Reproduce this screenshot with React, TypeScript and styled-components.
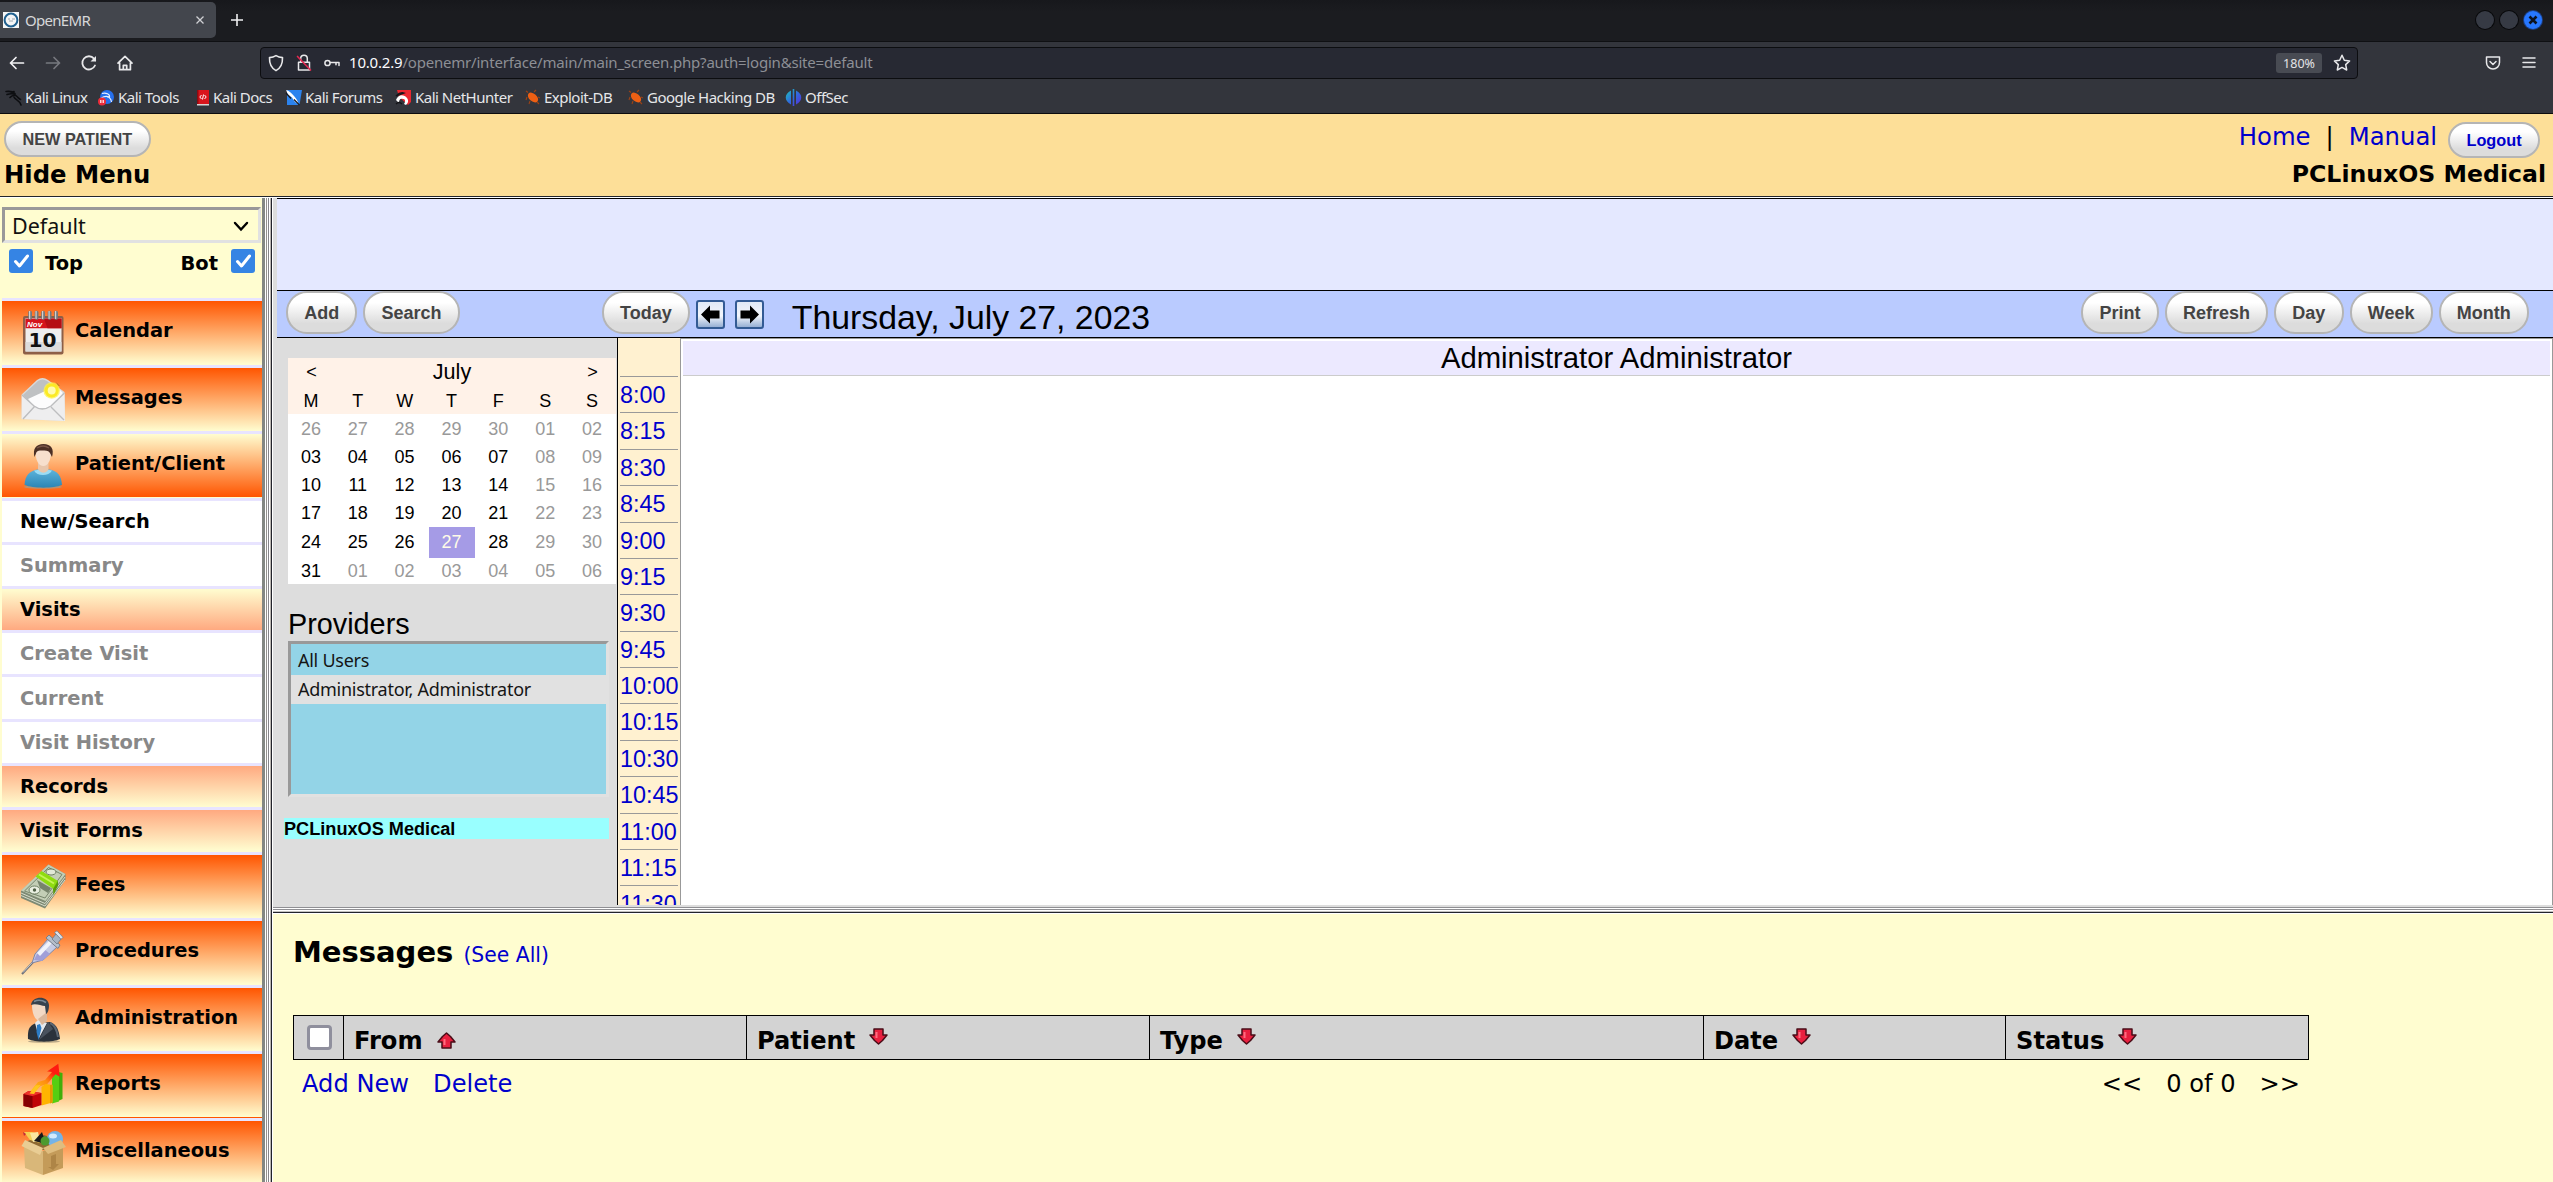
import React from "react";
import styled, { createGlobalStyle, css } from "styled-components";

const sans = `"Liberation Sans", Arial, sans-serif`;
const dejavu = `"DejaVu Sans", Verdana, sans-serif`;
const ui = `"Noto Sans", sans-serif`;

const Global = createGlobalStyle`
  * { box-sizing: border-box; }
  html, body { margin: 0; padding: 0; }
  body { width: 2553px; height: 1182px; overflow: hidden; background: #fffdd0; }
  svg { display: block; flex: none; }
`;

const Page = styled.div`
  width: 2553px;
  height: 1182px;
  display: flex;
  flex-direction: column;
  overflow: hidden;
`;

/* ---------- browser chrome ---------- */

const TabStrip = styled.div`
  height: 42px;
  flex: none;
  display: flex;
  align-items: flex-start;
  justify-content: space-between;
  background: linear-gradient(#17181c, #1b1c20 30%);
  border-bottom: 1px solid #0f1013;
  font-family: ${ui};
`;

const TabGroup = styled.div`
  display: flex;
  align-items: center;
  gap: 14px;
  padding-top: 2px;
`;

const Tab = styled.div`
  width: 216px;
  height: 36px;
  display: flex;
  align-items: center;
  background: #43464d;
  border-radius: 0 5px 5px 0;
  padding: 0 11px 0 3px;
`;

const TabTitle = styled.span`
  flex: 1;
  padding-left: 6px;
  color: #d6d7d9;
  font-size: 15px;
  line-height: 20px;
  letter-spacing: -0.7px;
`;

const WindowControls = styled.div`
  display: flex;
  gap: 6px;
  padding: 11px 11px 0 0;
`;

const WindowDot = styled.span<{ $close?: boolean }>`
  width: 18px;
  height: 18px;
  border-radius: 50%;
  display: flex;
  align-items: center;
  justify-content: center;
  background: ${(p) => (p.$close ? "#2777ff" : "#363a44")};
  box-shadow: 0 0 0 1px ${(p) => (p.$close ? "#1d3f82" : "#08090b")};
`;

const NavBar = styled.div`
  height: 41px;
  flex: none;
  display: flex;
  align-items: center;
  background: #33353c;
  padding: 0 15px 0 7px;
`;

const NavButtons = styled.div`
  display: flex;
  gap: 16px;
  width: 253px;
`;

const UrlBar = styled.div`
  width: 2098px;
  height: 32px;
  display: flex;
  align-items: center;
  background: #272933;
  border: 1px solid #0c0d10;
  border-radius: 4px;
  padding: 0 5px 0 6px;
`;

const UrlIcons = styled.div`
  display: flex;
  gap: 10px;
  width: 82px;
`;

const Url = styled.span`
  flex: 1;
  font: 15px/22px ${ui};
  letter-spacing: -0.2px;
  margin-top: -1px;
  color: #8d8f95;
  white-space: nowrap;
  b {
    font-weight: 400;
    color: #fbfbfe;
  }
`;

const Zoom = styled.span`
  width: 46px;
  height: 20px;
  background: #484b53;
  border-radius: 3px;
  color: #e4e4e6;
  font: 12.5px/21px ${ui};
  text-align: center;
  margin-right: 10px;
`;

const NavRight = styled.div`
  flex: 1;
  display: flex;
  justify-content: flex-end;
  gap: 18px;
`;

const Bookmarks = styled.div`
  height: 31px;
  flex: none;
  display: flex;
  background: #33353c;
  border-bottom: 1px solid #0c0c0d;
  padding: 0 0 2px 5px;
`;

const Bookmark = styled.div<{ $w: number }>`
  width: ${(p) => p.$w}px;
  display: flex;
  align-items: center;
  gap: 3px;
  font: 15px/20px ${ui};
  letter-spacing: -0.5px;
  color: #e6e7e9;
  white-space: nowrap;
  svg {
    margin-top: 1px;
  }
`;

/* ---------- application header ---------- */

const Header = styled.header`
  height: 84px;
  flex: none;
  display: flex;
  justify-content: space-between;
  background: #fddf98;
  border-bottom: 1px solid #fff;
  box-shadow: inset 0 -1px 0 #23262b;
  font-family: ${dejavu};
  font-size: 24.3px;
  padding: 7px 7px 0 4px;
`;

const HeaderRight = styled.div`
  display: flex;
  flex-direction: column;
  align-items: flex-end;
`;

const HeaderLinks = styled.div`
  height: 37px;
  display: flex;
  gap: 15px;
  padding-right: 6px;
  line-height: 30px;
  padding-top: 1px;
`;

const Link = styled.a`
  color: #0000cc;
  white-space: nowrap;
`;

const HeaderTitle = styled.div<{ $gap: number; $size: number }>`
  font-size: ${(p) => p.$size}px;
  font-weight: 700;
  line-height: 25px;
  margin-top: ${(p) => p.$gap}px;
  white-space: nowrap;
`;

const Pill = styled.button<{ $size?: "small"; $blue?: boolean }>`
  font-family: ${sans};
  font-weight: 700;
  color: ${(p) => (p.$blue ? "#0000cc" : "#444")};
  background: linear-gradient(#fff 25%, #dcdcdc 78%);
  border: 2px solid #b5b5b5;
  display: block;
  flex: none;
  margin: 0 0 0 ${(p) => (p.$blue ? "-4px" : "0")};
  ${(p) =>
    p.$size === "small"
      ? css`
          height: 36px;
          font-size: 16.3px;
          line-height: 32px;
          padding: 0 16.4px;
          border-radius: 18px;
        `
      : css`
          height: 43px;
          font-size: 18px;
          line-height: 39px;
          padding: 1px 16.2px 0;
          border-radius: 21px;
        `}
`;

/* ---------- frames ---------- */

const Frames = styled.div`
  flex: 1;
  min-height: 0;
  display: flex;
`;

const Sidebar = styled.nav`
  width: 262px;
  flex: none;
  padding: 9px 0 0 2px;
  overflow: hidden;
  background: #fffdd0;
  font: 700 19.45px/25px ${dejavu};
`;

const VSplit = styled.div`
  width: 11px;
  flex: none;
  background: linear-gradient(
    90deg,
    #838783 3px,
    #fff 3px 4px,
    #93928e 4px 5px,
    #fff 5px 6px,
    #85858a 6px 7px,
    #fff 7px 8px,
    #b9b5b0 8px 9px,
    #22232b 9px 10px,
    #fff 10px
  );
`;

const HSplit = styled.div`
  height: 9px;
  flex: none;
  background: linear-gradient(
    #ddd 2px,
    #8f8f93 2px 3px,
    #fff 3px 4px,
    #8f8f93 4px 5px,
    #fff 5px 6px,
    #c4c2c0 6px 7px,
    #23242c 7px 8px,
    #fff 8px
  );
`;

const FrameSelect = styled.div`
  width: 259px;
  height: 36px;
  border: 3px solid;
  border-color: #999 #e1e1e1 #e1e1e1 #999;
  display: flex;
  align-items: center;
  justify-content: space-between;
  padding: 2px 9px 0 7px;
  font: 400 21.5px/28px ${ui};
  color: #111;
`;

const Toggles = styled.div`
  height: 55px;
  padding: 6px 7px 0 7px;
  display: flex;
  justify-content: space-between;
  align-items: flex-start;
`;

const Toggle = styled.label<{ $gap: number }>`
  display: flex;
  gap: ${(p) => p.$gap}px;
  line-height: 30px;
`;

const CheckedBox = styled.span`
  width: 24px;
  height: 24px;
  border-radius: 3px;
  background: #3584e4;
`;

type Tone = "orange" | "orangeOpen" | "peach" | "peachOpen" | "white";

const tones: Record<Tone, string> = {
  orange: "linear-gradient(#ff5500, #fffdd0)",
  orangeOpen: "linear-gradient(#fffdd0, #ff5500)",
  peach: "linear-gradient(#ffa980, #fffdd0)",
  peachOpen: "linear-gradient(#fffdd0, #ffa980)",
  white: "#fff",
};

/* a row may be followed by a one pixel seam before the next row's rule */
const MenuItem = styled.div<{ $h: number; $tone: Tone; $off?: boolean; $seam?: string }>`
  height: ${(p) => p.$h + 3}px;
  border-top: 3px solid #e8e4ff;
  ${(p) => p.$seam && `box-shadow: 0 1px 0 ${p.$seam}; margin-bottom: 1px;`}
  background: ${(p) => tones[p.$tone]} padding-box;
  color: ${(p) => (p.$off ? "#888" : "#000")};
  display: flex;
  align-items: center;
  gap: 9px;
  padding-left: 18px;
`;

const MenuLabel = styled.span<{ $raised?: boolean }>`
  padding-bottom: ${(p) => (p.$raised ? 4 : 0)}px;
`;

const Main = styled.main`
  flex: 1;
  min-width: 0;
  display: flex;
  flex-direction: column;
`;

/* ---------- calendar frame ---------- */

const CalendarFrame = styled.section`
  height: 707px;
  flex: none;
  background: #ddd;
  padding-left: 4px;
  display: flex;
  flex-direction: column;
  font-family: ${sans};
`;

const TitlePane = styled.div`
  height: 92px;
  flex: none;
  background: #e4e8ff;
  border-top: 1px solid #000;
`;

const Toolbar = styled.div`
  height: 48px;
  flex: none;
  border: solid #000;
  border-width: 1px 0;
  background: #bacbff;
  display: flex;
  gap: 6px;
  padding: 0 24px 0 9px;
`;

const ToolbarSpacer = styled.div<{ $w?: number }>`
  ${(p) => (p.$w ? `width: ${p.$w}px;` : "flex: 1;")}
`;

const StepButtons = styled.div`
  display: flex;
  gap: 10px;
  padding: 9px 0 0 0;
`;

const DateTitle = styled.div`
  font-size: 33.8px;
  line-height: 53px;
  height: 46px;
  padding-left: 22px;
  white-space: nowrap;
`;

const CalendarBody = styled.div`
  flex: 1;
  min-height: 0;
  display: flex;
  overflow: hidden;
`;

const Aside = styled.aside`
  width: 340px;
  flex: none;
  padding: 20px 0 0 7px;
`;

const MiniCalendar = styled.div`
  width: 328px;
  margin-left: 4px;
  background: linear-gradient(#fff2e8 56px, #fff 56px);
  font-size: 18px;
`;

const MonthBar = styled.div`
  height: 28px;
  display: grid;
  grid-template-columns: 1fr 5fr 1fr;
  text-align: center;
  line-height: 29px;
`;

const Month = styled.span`
  font-size: 21.6px;
  line-height: 28px;
`;

const Week = styled.div<{ $h: number }>`
  display: grid;
  grid-template-columns: repeat(7, 1fr);
  height: ${(p) => p.$h}px;
  line-height: ${(p) => p.$h + 2}px;
  text-align: center;
`;

const Day = styled.span<{ $dim?: boolean; $today?: boolean }>`
  height: 100%;
  overflow: visible;
  padding-right: 1px;
  color: ${(p) => (p.$today ? "#fffbe8" : p.$dim ? "#999" : "#000")};
  background: ${(p) => (p.$today ? "#a59be6" : "none")};
`;

const ProvidersTitle = styled.div`
  font-size: 28.8px;
  line-height: 36px;
  height: 35px;
  margin: 22px 0 0 4px;
`;

const ProviderList = styled.div`
  width: 321px;
  height: 156px;
  margin-left: 4px;
  border: 3px solid;
  border-color: #999 #e1e1e1 #e1e1e1 #999;
  background: #93d4e7;
  font: 18px/29px ${ui};
  letter-spacing: -0.27px;
  color: #151515;
  padding-top: 2px;
`;

const Provider = styled.div<{ $selected?: boolean }>`
  height: 29px;
  padding-left: 7px;
  background: ${(p) => (p.$selected ? "#e1e1e1" : "none")};
`;

const Facility = styled.div`
  width: 325px;
  height: 21px;
  margin-top: 21px;
  background: #9ff;
  font-size: 18.15px;
  font-weight: 700;
  line-height: 22px;
`;

const Times = styled.div`
  width: 63px;
  flex: none;
  border-left: 1px solid #000;
  background: #fff1d0;
  padding: 38px 2px 0 2px;
`;

const Time = styled.div`
  height: 36.38px;
  border-top: 1px solid #999;
  font-size: 23.4px;
  line-height: 36px;
  color: #0000cc;
`;

const DayColumn = styled.div`
  flex: 1;
  border: solid #999;
  border-width: 1px 1px 0 1px;
  padding: 2px;
  background: #fff;
`;

const DayHeading = styled.div`
  height: 35px;
  background: #ece9ff;
  border-bottom: 1px solid #ccc;
  font-size: 29.25px;
  line-height: 34px;
  text-align: center;
`;

/* ---------- messages frame ---------- */

const MessagesFrame = styled.section`
  flex: 1;
  background: #fffdd0;
  padding: 21px 0 0 20px;
  font: 24.15px/32px ${dejavu};
`;

const MessagesTitle = styled.h1`
  margin: 0;
  font-size: 29px;
  line-height: 34px;
  height: 34px;
`;

const SeeAll = styled.a`
  color: #0000cc;
  font-size: 20.35px;
  font-weight: 400;
`;

const Table = styled.div`
  width: 2016px;
  height: 45px;
  margin-top: 46px;
  border: 1px solid #000;
  background: #d3d3d3;
  display: flex;
  font-weight: 700;
`;

const HeadCell = styled.div<{ $w?: number }>`
  ${(p) => (p.$w ? `width: ${p.$w}px; border-right: 1px solid #000;` : "flex: 1;")}
  display: flex;
  gap: 14px;
  padding: 9px 0 0 10px;
`;

const SortIcon = styled.span<{ $up?: boolean }>`
  padding-top: ${(p) => (p.$up ? 7 : 3)}px;
`;

const EmptyBox = styled.span`
  width: 25px;
  height: 25px;
  margin-left: 3px;
  border: 3px solid #8f8f9d;
  border-radius: 4px;
  background: #fff;
`;

const TableFoot = styled.div`
  width: 2016px;
  display: flex;
  justify-content: space-between;
  padding: 8px 9px 0 9px;
`;

const FootGroup = styled.div`
  display: flex;
  gap: 24px;
`;

/* ---------- drawings ---------- */

const line = { fill: "none", stroke: "#e8e8ea", strokeWidth: 1.7, strokeLinecap: "round", strokeLinejoin: "round" } as const;

const BackIcon = ({ dim }: { dim?: boolean }) => (
  <svg width="20" height="20" viewBox="0 0 20 20" {...line} stroke={dim ? "#77797f" : "#f3f3f5"}>
    <path d={dim ? "M3.5 10h13M11 4.5l5.500 5.500L11 15.500" : "M16.500 10H3.500M9 4.500L3.500 10 9 15.500"} />
  </svg>
);

const ReloadIcon = () => (
  <svg width="20" height="20" viewBox="0 0 20 20" {...line} strokeWidth="1.8">
    <path d="M16 12.5A6.6 6.6 0 1 1 15 5.600l1.200 1.600" />
    <path d="M17 3v5.500h-5.500z" fill="#e8e8ea" stroke="none" />
  </svg>
);

const HomeIcon = () => (
  <svg width="20" height="20" viewBox="0 0 20 20" {...line}>
    <path d="M3 10.200L10 3.300l7 6.900M4.600 9.500v7.200h10.800V9.500M8.300 16.500v-4.200h3.400v4.200" />
  </svg>
);

const ShieldIcon = () => (
  <svg width="18" height="18" viewBox="0 0 18 18" {...line} strokeWidth="1.6">
    <path d="M9 1.600c2 1.300 4.200 1.900 6.500 2 .2 5.800-1.600 10.400-6.500 13-4.900-2.600-6.700-7.200-6.500-13C4.800 3.500 7 2.900 9 1.600z" />
  </svg>
);

const LockIcon = () => (
  <svg width="18" height="18" viewBox="0 0 18 18" {...line} strokeWidth="1.500">
    <path d="M5.700 8V4.500a3.300 3.300 0 0 1 6.600 0V8M3.500 8.200h11v7.800h-11z" />
    <path d="M2.500 2.500L15.500 16" stroke="#e22850" strokeWidth="1.700" />
  </svg>
);

const KeyIcon = () => (
  <svg width="18" height="18" viewBox="0 0 18 18" {...line} strokeWidth="1.500">
    <circle cx="4.500" cy="9" r="2.600" />
    <path d="M7.500 8.500h8.500v3M13 8.500v2.200" />
  </svg>
);

const StarIcon = () => (
  <svg width="20" height="20" viewBox="0 0 20 20" {...line} strokeWidth="1.500">
    <path d="M10 2.300l2.300 5 5.300.6-3.900 3.700 1 5.400L10 14.400 5.300 17l1-5.400L2.400 7.900l5.300-.6z" />
  </svg>
);

const PocketIcon = () => (
  <svg width="18" height="18" viewBox="0 0 18 18" {...line} strokeWidth="1.500">
    <path d="M2.500 3h13v5.500a6.500 6.500 0 0 1-13 0zM6 7.500l3 3 3-3" />
  </svg>
);

const BurgerIcon = () => (
  <svg width="18" height="18" viewBox="0 0 18 18" {...line} strokeWidth="1.500">
    <path d="M3 4h12M3 8.500h12M3 13h12" />
  </svg>
);

const Favicon = () => (
  <svg width="16" height="16" viewBox="0 0 16 16">
    <rect width="16" height="16" fill="#f5f6f7" />
    <circle cx="8" cy="8" r="6.400" fill="none" stroke="#20608f" strokeWidth="2" />
    <path d="M5 7h2M9 7h3M6 9h4" stroke="#a0a8b0" />
  </svg>
);

const DragonIcon = () => (
  <svg width="17" height="17" viewBox="0 0 17 17" fill="none" stroke="#0d0e11" strokeWidth="1.600" strokeLinecap="round">
    <path d="M1 2.500c4-.5 7 0 9 2M2 5.500c3-1 6-1 8 0M5 8.500c2-2 5-3 7-1 1.500 1.500 2 2.500 3.500 3M9 8c1 3 5 2.500 7 8M6 4.500l3-2" />
  </svg>
);

const ToolsIcon = () => (
  <svg width="17" height="17" viewBox="0 0 17 17">
    <circle cx="9" cy="8" r="7" fill="#2670ee" />
    <path d="M4 4.500c4-1 8 .5 7.500 3.500-3-1-6-.5-8 1M9 8c3 0 4 2 4.500 5" fill="none" stroke="#e8efff" strokeWidth="1.200" />
    <circle cx="4" cy="12.500" r="4" fill="#ee2c3a" />
    <path d="M2.500 11v3M4 11v3M5.500 11v3" stroke="#fff" strokeWidth=".8" />
  </svg>
);

const DocsIcon = () => (
  <svg width="14" height="17" viewBox="0 0 14 17">
    <path d="M1 1h12v14H1z" fill="#d9151c" />
    <path d="M1 1h1.500v14H1z" fill="#8f0a10" />
    <path d="M1 15h12v1.500H1z" fill="#d8d4d4" />
    <path d="M5.500 6L3.800 8l1.700 2M8.500 6l1.700 2-1.700 2M7.500 5.500l-1 5" fill="none" stroke="#fff" strokeWidth="1" />
  </svg>
);

const ForumsIcon = () => (
  <svg width="17" height="17" viewBox="0 0 17 17">
    <path d="M2 1h15l-2.500 15H2z" fill="#2b83ee" />
    <path d="M1 1c3 1 5 2.500 8 6 2 2.500 3.500 4 5 8.500l-4-2.500-3-4.500-4-3z" fill="#fff" />
    <path d="M1 4l5 5.500M9 10.500l5.500 5.500" stroke="#15161a" strokeWidth="1.200" />
  </svg>
);

const HunterIcon = () => (
  <svg width="17" height="17" viewBox="0 0 17 17">
    <path d="M2 1h14v12L13 16 4 8z" fill="#ea2730" />
    <path d="M1 11c2-6 8-6 11-2 2 3 1 5-1 7l-2-1c2-3 1-5-1-5-3-1-4 1-4 4z" fill="#fff" />
    <path d="M1 7c2-2 5-4 8-3l-5 2zM1 15c2-2 4-2 6 0" stroke="#141418" fill="none" strokeWidth="1.300" />
  </svg>
);

const BugIcon = () => (
  <svg width="16" height="17" viewBox="0 0 16 17">
    <ellipse cx="8" cy="8.500" rx="6" ry="3.800" transform="rotate(42 8 8.500)" fill="#ee5f13" />
    <path d="M2 8l-1 3M5 12l-1 3M9 3l2-2M3 3.500L1 2M13 8l2 1M12 13l2 2" stroke="#9a4216" strokeWidth="1.100" fill="none" />
  </svg>
);

const OffsecIcon = () => (
  <svg width="17" height="17" viewBox="0 0 17 17">
    <defs>
      <linearGradient id="offsec" x1="0" y1="0" x2="1" y2="1">
        <stop offset="0" stopColor="#1cc7b4" />
        <stop offset=".5" stopColor="#2f6be0" />
        <stop offset="1" stopColor="#5a2ad6" />
      </linearGradient>
    </defs>
    <path d="M6 1.500v14C-1 12-1 5 6 1.500zM7.700 0h1.600v17H7.700zM11 1.500c7 3.500 7 10.500 0 14z" fill="url(#offsec)" />
  </svg>
);

const Check = () => (
  <svg width="24" height="24" viewBox="0 0 24 24" fill="none" stroke="#fff" strokeWidth="3" strokeLinejoin="round" strokeLinecap="round">
    <path d="M6.500 12.500l4 4.500L18.500 7" />
  </svg>
);

const StepIcon = ({ next }: { next?: boolean }) => (
  <svg width="29" height="29" viewBox="0 0 29 29">
    <defs>
      <linearGradient id="step" x1="0" y1="0" x2="0" y2="1">
        <stop offset="0" stopColor="#dfe8f6" />
        <stop offset=".55" stopColor="#f3f6fb" />
        <stop offset="1" stopColor="#8ea9d0" />
      </linearGradient>
    </defs>
    <rect x="1" y="1" width="27" height="27" rx="2" fill="url(#step)" stroke="#335b94" strokeWidth="2" />
    <path d="M5 14.500L14 5.500v5h9.500v8H14v5z" fill="#000" transform={next ? "translate(29 0) scale(-1 1)" : undefined} />
  </svg>
);

const SortArrow = ({ up }: { up?: boolean }) => (
  <svg width="19" height="17" viewBox="0 0 19 17">
    <path
      d="M5 1h9v6h4l-4.500 5.500L9.500 16 5.500 12.500 1 7h4z"
      fill="#e8203f"
      stroke="#4a0d18"
      strokeWidth="1.500"
      strokeLinejoin="round"
      transform={up ? "translate(0 17) scale(1 -1)" : undefined}
    />
    <path d="M7.500 4v6" stroke="#ff6c80" strokeWidth="2" transform={up ? "translate(0 3)" : undefined} />
  </svg>
);

const Art = ({ children }: { children: React.ReactNode }) => (
  <svg width="46" height="46" viewBox="0 0 46 46">
    {children}
  </svg>
);

const NovText = styled.text`
  font: italic 700 8px ${sans};
  fill: #fff;
`;

const TenText = styled.text`
  font: 700 19px ${dejavu};
  fill: #111;
`;

const CalendarArt = () => (
  <Art>
    <rect x="3" y="6" width="40.500" height="38.500" rx="2" fill="#8d5f47" />
    <path d="M5.500 8h36v33.500h-36z" fill="#eeeeee" />
    <path d="M5.500 32h36v9.500h-36z" fill="#dcdcdc" />
    <path d="M5.500 8.500h36v9.700h-36z" fill="#d5141b" />
    <path d="M24 8.500h17.500v9.700h-14z" fill="#b50e14" />
    <NovText x="7" y="16.500">Nov</NovText>
    {[9.5, 16, 22.5, 29, 35.5].map((x) => (
      <g key={x}>
        <rect x={x - 1.3} y=".8" width="3.800" height="9" rx="1.700" fill="#77787a" />
        <rect x={x - 0.5} y="1" width="1.200" height="8" fill="#d0d0d0" />
      </g>
    ))}
    <TenText x="8.500" y="37" textLength="28" lengthAdjust="spacingAndGlyphs">10</TenText>
  </Art>
);

const MailArt = () => (
  <Art>
    <path d="M1.700 17.500L17 3q5.500-4 11 0l16.500 12L45 44 1.700 42z" fill="#d9dadb" />
    <path d="M3 18L18 4q4.500-3 9 0l16 12-12 14H15z" fill="#bfc1c3" />
    <path d="M8 22L36 9l7 7-11 15H15z" fill="#fcfcfd" />
    <path d="M1.700 18L14 29q8 6 17 0l13.500-13L45 44 1.700 42z" fill="#eeeeef" />
    <path d="M2 18l12 11q8 6 17 0l13.500-13M3 42l12-13M44 43L31 30" fill="none" stroke="#bdbec0" strokeWidth="1.400" />
    <circle cx="31.700" cy="13.500" r="8.300" fill="#fff34a" opacity=".75" />
    <circle cx="31.700" cy="13.500" r="7" fill="#fbea25" />
    <circle cx="31.700" cy="13.500" r="4" fill="#fffbb0" />
    <path d="M36 5l4 4-2-.5z" fill="#a98715" />
  </Art>
);

const PatientArt = () => (
  <Art>
    <defs>
      <linearGradient id="shirt" x1="0" y1="0" x2="0" y2="1">
        <stop offset="0" stopColor="#5db4dc" />
        <stop offset="1" stopColor="#2c85b4" />
      </linearGradient>
    </defs>
    <ellipse cx="23" cy="44" rx="19" ry="1.700" fill="#93a6a0" opacity=".6" />
    <path d="M4.500 42C5 32 10 28 17 26.500h13c7 1.500 11.500 6 12 15.500-8 3.500-29 3.500-37.500 0z" fill="url(#shirt)" />
    <path d="M14 27.500c5-1.500 14-1.500 18 0-3 6-15 6-18 0z" fill="#9bdcf4" />
    <path d="M18 20h10.500v6c-2 5-8 5-10.500 0z" fill="#e8c6ac" />
    <path d="M15.500 9c0-8 15.500-8 15.500 0 0 8-3 14-7.700 14S15.500 17 15.500 9z" fill="#f7dfcd" />
    <path d="M14.500 14C12.500 6 16 1 23.500 1s11 5 8.500 13l-1.500-3c-1-3-4-4-8-3.500-4 0-6 .5-6.500 3z" fill="#4c2f24" />
    <path d="M17 5q6-4 12 0" fill="none" stroke="#7a5546" strokeWidth="1.500" />
  </Art>
);

const MoneyArt = () => (
  <Art>
    <path d="M1 27L28.500.5 45.500 10v6L25 44.500 1 34z" fill="#7e8a74" />
    <path d="M1 26.500L28.500.5 45.500 10 25.500 37z" fill="#c3ceb6" />
    <path d="M1 29l24 10.500 20-26.500M1 31.500L25 42l20-26" fill="none" stroke="#d6dccb" strokeWidth="1" />
    <path d="M4.500 27L28.500 3.500 42 10.500 25 34z" fill="none" stroke="#78866d" />
    <ellipse cx="14.500" cy="26" rx="5.500" ry="4" fill="#e9efe1" stroke="#6f8064" />
    <circle cx="14.500" cy="26" r="1.700" fill="#4e5e45" />
    <ellipse cx="31" cy="8" rx="5" ry="3" fill="#e2e9d8" stroke="#6f8064" />
    <path d="M15.500 12.500l6-5.500L38 17l-4.500 8z" fill="#8fdc10" />
    <path d="M33 25l5-8.500v5L33.500 31z" fill="#5a9c08" />
    <path d="M19 10.500l15 9" stroke="#c4f457" strokeWidth="2" />
    <path d="M17 16l14 8-3 5-8-5z" fill="#43513b" opacity=".6" />
  </Art>
);

const SyringeArt = () => (
  <Art>
    <path d="M2 44l13-14" stroke="#6d7078" strokeWidth="2" />
    <path d="M3 42.500l12-13" stroke="#d7dae0" strokeWidth=".8" />
    <path d="M12 33l3-9L28 9l9 8-14 13z" fill="#c6cbe4" stroke="#8287a5" />
    <path d="M14 30l3-6 6-6 7 6-8 7z" fill="#a09fd8" />
    <path d="M17 23L29 11l3 2-12 13z" fill="#f1f3fb" />
    <path d="M26 8l3-3 11 10-2 3.500z" fill="#b6bfcb" stroke="#78818e" />
    <path d="M32 9l4-5 5 5-4 5z" fill="#a8b4c4" stroke="#6e7886" strokeWidth=".8" />
    <path d="M34.500 2.500L37 .8l6 6.500-2 2z" fill="#d9e0ea" stroke="#747e8d" strokeWidth=".8" />
  </Art>
);

const AdminArt = () => (
  <Art>
    <ellipse cx="24" cy="44.500" rx="16" ry="1.300" fill="#77705f" opacity=".5" />
    <path d="M8 42c-.5-9 1-13 7-15.500l15-1.500c7 2 9 9 10 17-7 3.500-25 3.500-32 0z" fill="#2b323b" />
    <path d="M30 26c5 2 7 7 8 14" fill="none" stroke="#5b6672" strokeWidth="2" />
    <path d="M15 26l3-3 9 3-8 15z" fill="#e4e9ef" />
    <path d="M17 28l3-1 1.500 4-3 12-2-8z" fill="#2b7bc5" />
    <path d="M28 25l-9 18 14-11z" fill="#49525e" />
    <path d="M12 9c0-6 14-7 15 0 .5 7-2 15-7 15S12 16 12 9z" fill="#f3d9c4" />
    <path d="M18 22l9-7v9l-5 4z" fill="#dbb79b" />
    <path d="M11 8c1-9 17-10 18 0 0 4-1 8-3 9l-1-8c-4 0-9-3-14-1z" fill="#37424d" />
    <path d="M14 4.500q6-3 12 1" fill="none" stroke="#778795" strokeWidth="1.600" />
  </Art>
);

const ReportsArt = () => (
  <Art>
    <defs>
      <linearGradient id="trend" x1="0" y1="1" x2="1" y2="0">
        <stop offset="0" stopColor="#ffd21a" />
        <stop offset=".5" stopColor="#ff8a10" />
        <stop offset=".75" stopColor="#ff1a10" />
      </linearGradient>
    </defs>
    <path d="M32 12l4-3.500 6.500 1.500v26L37 38.500l-5 .5z" fill="#41ae09" />
    <path d="M32 11l7-1v28.500l-7 2z" fill="#55ce12" />
    <path d="M9 30l9-11 7-2 7-8-5-.5L38.300.8l1.500 13-4.300-2.500-8.500 10-7 2-7 8z" fill="url(#trend)" />
    <path d="M21.500 24l4-3 7 1v17.500l-11 3z" fill="#ffb400" />
    <path d="M30 22l2.500-.5v18l-2.500 1z" fill="#e39a00" />
    <path d="M3.500 31l5-3 13 2v12l-9 3-9-2z" fill="#c00508" />
    <path d="M3.500 31l9 2v12l-9-2z" fill="#870003" />
    <path d="M3.500 31l5-3 13 2-9 3z" fill="#ef322a" />
    <path d="M9.500 30.500l6-8 5-.5-6.500 9z" fill="#ffc51c" />
  </Art>
);

const BoxArt = () => (
  <Art>
    <path d="M5 12L24 5l17 6v9H5z" fill="#8e6a33" />
    <circle cx="35" cy="9" r="8" fill="#74b3e8" />
    <ellipse cx="33" cy="6" rx="4" ry="2.500" fill="#d3eafc" />
    <path d="M4 2l6 8 10 3-2-9-6-2z" fill="#f5cf51" />
    <path d="M10 3l8-1 2 9-7 1z" fill="#fbe6a0" />
    <path d="M3 2l3 2-2 2z" fill="#c3283a" />
    <path d="M14 11l8-9 4 12z" fill="#17191c" />
    <circle cx="25" cy="11" r="4.500" fill="#4c9a2f" />
    <path d="M4 16l19 5v24L5 38z" fill="#d9b779" />
    <path d="M23 21l20-6v23L23 45z" fill="#c49b59" />
    <path d="M1.500 16l3.500-6 18 8-3 7z" fill="#e9cd94" />
    <path d="M23 18l18-8 5 7-18 7z" fill="#dfbd7f" />
    <path d="M31 26l5-2v10h3l-6 6-5-3h3z" fill="#ae8546" />
  </Art>
);

/* ---------- data ---------- */

const bookmarks: { label: string; icon: React.ReactNode; w: number }[] = [
  { label: "Kali Linux", icon: <DragonIcon />, w: 93 },
  { label: "Kali Tools", icon: <ToolsIcon />, w: 98 },
  { label: "Kali Docs", icon: <DocsIcon />, w: 89 },
  { label: "Kali Forums", icon: <ForumsIcon />, w: 110 },
  { label: "Kali NetHunter", icon: <HunterIcon />, w: 130 },
  { label: "Exploit-DB", icon: <BugIcon />, w: 103 },
  { label: "Google Hacking DB", icon: <BugIcon />, w: 157 },
  { label: "OffSec", icon: <OffsecIcon />, w: 90 },
];

const cream = "#fffdd0";

const menu: { label: string; h: number; tone: Tone; icon?: React.ReactNode; off?: boolean; seam?: string }[] = [
  { label: "Calendar", h: 63, tone: "orange", icon: <CalendarArt />, seam: cream },
  { label: "Messages", h: 63, tone: "orange", icon: <MailArt /> },
  { label: "Patient/Client", h: 63, tone: "orangeOpen", icon: <PatientArt />, seam: cream },
  { label: "New/Search", h: 41, tone: "white" },
  { label: "Summary", h: 41, tone: "white", off: true },
  { label: "Visits", h: 41, tone: "peachOpen" },
  { label: "Create Visit", h: 41, tone: "white", off: true },
  { label: "Current", h: 42, tone: "white", off: true },
  { label: "Visit History", h: 41, tone: "white", off: true },
  { label: "Records", h: 41, tone: "peach" },
  { label: "Visit Forms", h: 41, tone: "peach", seam: cream },
  { label: "Fees", h: 63, tone: "orange", icon: <MoneyArt /> },
  { label: "Procedures", h: 63, tone: "orange", icon: <SyringeArt />, seam: cream },
  { label: "Administration", h: 63, tone: "orange", icon: <AdminArt /> },
  { label: "Reports", h: 63, tone: "orange", icon: <ReportsArt />, seam: "#ff5500" },
  { label: "Miscellaneous", h: 63, tone: "orange", icon: <BoxArt /> },
];

const weeks = [
  ["26", "27", "28", "29", "30", "01", "02"],
  ["03", "04", "05", "06", "07", "08", "09"],
  ["10", "11", "12", "13", "14", "15", "16"],
  ["17", "18", "19", "20", "21", "22", "23"],
  ["24", "25", "26", "27", "28", "29", "30"],
  ["31", "01", "02", "03", "04", "05", "06"],
];
const weekHeights = [28, 28, 28, 29, 29, 28];

const isDim = (week: number, day: number) => week === 0 || day > 4 || (week === 5 && day > 0);

const times = ["8", "9", "10", "11"].flatMap((h) => ["00", "15", "30", "45"].map((m) => `${h}:${m}`)).slice(0, 15);

const columns: { label: string; w?: number; up?: boolean }[] = [
  { label: "From", w: 403, up: true },
  { label: "Patient", w: 403 },
  { label: "Type", w: 554 },
  { label: "Date", w: 302 },
  { label: "Status" },
];

export default function App() {
  return (
    <Page>
      <Global />
      <TabStrip>
        <TabGroup>
          <Tab>
            <Favicon />
            <TabTitle>OpenEMR</TabTitle>
            <svg width="10" height="10" viewBox="0 0 10 10" stroke="#d0d1d4" strokeWidth="1.300">
              <path d="M1.500 1.500l7 7M8.500 1.500l-7 7" />
            </svg>
          </Tab>
          <svg width="14" height="14" viewBox="0 0 14 14" stroke="#f0f0f2" strokeWidth="1.600">
            <path d="M7 1v12M1 7h12" />
          </svg>
        </TabGroup>
        <WindowControls>
          <WindowDot />
          <WindowDot />
          <WindowDot $close>
            <svg width="10" height="10" viewBox="0 0 10 10" stroke="#0c1220" strokeWidth="2.600">
              <path d="M1.500 1.500l7 7M8.500 1.500l-7 7" />
            </svg>
          </WindowDot>
        </WindowControls>
      </TabStrip>
      <NavBar>
        <NavButtons>
          <BackIcon />
          <BackIcon dim />
          <ReloadIcon />
          <HomeIcon />
        </NavButtons>
        <UrlBar>
          <UrlIcons>
            <ShieldIcon />
            <LockIcon />
            <KeyIcon />
          </UrlIcons>
          <Url>
            <b>10.0.2.9</b>/openemr/interface/main/main_screen.php?auth=login&amp;site=default
          </Url>
          <Zoom>180%</Zoom>
          <StarIcon />
        </UrlBar>
        <NavRight>
          <PocketIcon />
          <BurgerIcon />
        </NavRight>
      </NavBar>
      <Bookmarks>
        {bookmarks.map((b) => (
          <Bookmark key={b.label} $w={b.w}>
            {b.icon}
            {b.label}
          </Bookmark>
        ))}
      </Bookmarks>

      <Header>
        <div>
          <Pill $size="small">NEW PATIENT</Pill>
          <HeaderTitle $gap={5} $size={24.3}>Hide Menu</HeaderTitle>
        </div>
        <HeaderRight>
          <HeaderLinks>
            <Link>Home</Link>
            <span>|</span>
            <Link>Manual</Link>
            <Pill $size="small" $blue>
              Logout
            </Pill>
          </HeaderLinks>
          <HeaderTitle $gap={4} $size={23.6}>PCLinuxOS Medical</HeaderTitle>
        </HeaderRight>
      </Header>

      <Frames>
        <Sidebar>
          <FrameSelect>
            Default
            <svg width="16" height="11" viewBox="0 0 16 11" fill="none" stroke="#000" strokeWidth="2.400" strokeLinecap="round">
              <path d="M2 2l6 6.500L14 2" />
            </svg>
          </FrameSelect>
          <Toggles>
            <Toggle $gap={12}>
              <CheckedBox>
                <Check />
              </CheckedBox>
              Top
            </Toggle>
            <Toggle $gap={13}>
              Bot
              <CheckedBox>
                <Check />
              </CheckedBox>
            </Toggle>
          </Toggles>
          {menu.map((m) => (
            <MenuItem key={m.label} $h={m.h} $tone={m.tone} $off={m.off} $seam={m.seam}>
              {m.icon}
              <MenuLabel $raised={!!m.icon}>{m.label}</MenuLabel>
            </MenuItem>
          ))}
        </Sidebar>
        <VSplit />
        <Main>
          <CalendarFrame>
            <TitlePane />
            <Toolbar>
              <Pill>Add</Pill>
              <Pill>Search</Pill>
              <ToolbarSpacer $w={130} />
              <Pill>Today</Pill>
              <StepButtons>
                <StepIcon />
                <StepIcon next />
              </StepButtons>
              <DateTitle>Thursday, July 27, 2023</DateTitle>
              <ToolbarSpacer />
              {["Print", "Refresh", "Day", "Week", "Month"].map((t) => (
                <Pill key={t}>{t}</Pill>
              ))}
            </Toolbar>
            <CalendarBody>
              <Aside>
                <MiniCalendar>
                  <MonthBar>
                    <span>&lt;</span>
                    <Month>July</Month>
                    <span>&gt;</span>
                  </MonthBar>
                  <Week $h={28}>
                    {["M", "T", "W", "T", "F", "S", "S"].map((d, i) => (
                      <Day key={i}>{d}</Day>
                    ))}
                  </Week>
                  {weeks.map((w, wi) => (
                    <Week key={wi} $h={weekHeights[wi]}>
                      {w.map((d, di) => (
                        <Day key={di} $dim={isDim(wi, di)} $today={wi === 4 && di === 3}>
                          {d}
                        </Day>
                      ))}
                    </Week>
                  ))}
                </MiniCalendar>
                <ProvidersTitle>Providers</ProvidersTitle>
                <ProviderList>
                  <Provider>All Users</Provider>
                  <Provider $selected>Administrator, Administrator</Provider>
                </ProviderList>
                <Facility>PCLinuxOS Medical</Facility>
              </Aside>
              <Times>
                {times.map((t) => (
                  <Time key={t}>{t}</Time>
                ))}
              </Times>
              <DayColumn>
                <DayHeading>Administrator Administrator</DayHeading>
              </DayColumn>
            </CalendarBody>
          </CalendarFrame>
          <HSplit />
          <MessagesFrame>
            <MessagesTitle>
              Messages <SeeAll>(See All)</SeeAll>
            </MessagesTitle>
            <Table>
              <HeadCell $w={50}>
                <EmptyBox />
              </HeadCell>
              {columns.map((c) => (
                <HeadCell key={c.label} $w={c.w}>
                  {c.label}
                  <SortIcon $up={c.up}>
                    <SortArrow up={c.up} />
                  </SortIcon>
                </HeadCell>
              ))}
            </Table>
            <TableFoot>
              <FootGroup>
                <Link>Add New</Link>
                <Link>Delete</Link>
              </FootGroup>
              <FootGroup>
                <span>&lt;&lt;</span>
                <span>0 of 0</span>
                <span>&gt;&gt;</span>
              </FootGroup>
            </TableFoot>
          </MessagesFrame>
        </Main>
      </Frames>
    </Page>
  );
}
